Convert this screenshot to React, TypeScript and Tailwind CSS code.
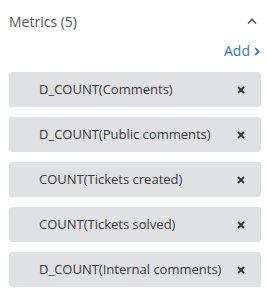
import React from "react";

const metrics = [
  "D_COUNT(Comments)",
  "D_COUNT(Public comments)",
  "COUNT(Tickets created)",
  "COUNT(Tickets solved)",
  "D_COUNT(Internal comments)",
];

export default function App() {
  return (
    <div
      className="w-[266px] h-[307px] bg-white pl-[9px] pr-[5px] pt-[12px]"
      style={{ fontFamily: '"Open Sans", "Noto Sans", sans-serif' }}
    >
      <div className="flex items-center justify-between h-[20px]">
        <span className="text-[14px] text-[#555] leading-none">Metrics (5)</span>
        <svg width="10" height="6" viewBox="0 0 10 6" className="mr-[4px] mb-[3px]">
          <path d="M1 5.5 L5 1.5 L9 5.5" fill="none" stroke="#444" strokeWidth="1.4" />
        </svg>
      </div>
      <div className="flex justify-end items-center h-[22px] mt-[8px]">
        <span className="text-[14px] text-[#2f77b5] leading-none">Add</span>
        <svg width="6" height="9" viewBox="0 0 6 9" className="ml-[4px] mr-[1px] mt-[1px]">
          <path d="M1.2 1 L4.5 4.5 L1.2 8" fill="none" stroke="#2f77b5" strokeWidth="1.8" />
        </svg>
      </div>
      <div className="flex flex-col gap-[10px] mt-[10px]">
        {metrics.map((m) => (
          <div
            key={m}
            className="h-[35px] rounded-[3px] bg-[#dfe1e3] flex items-center pl-[30px] pr-[16px]"
          >
            <span className="flex-1 text-[13px] text-[#3a3a3a] whitespace-nowrap">{m}</span>
            <svg width="8" height="8" viewBox="0 0 8 8">
              <path d="M1 1 L7 7 M7 1 L1 7" stroke="#333" strokeWidth="1.8" />
            </svg>
          </div>
        ))}
      </div>
    </div>
  );
}
